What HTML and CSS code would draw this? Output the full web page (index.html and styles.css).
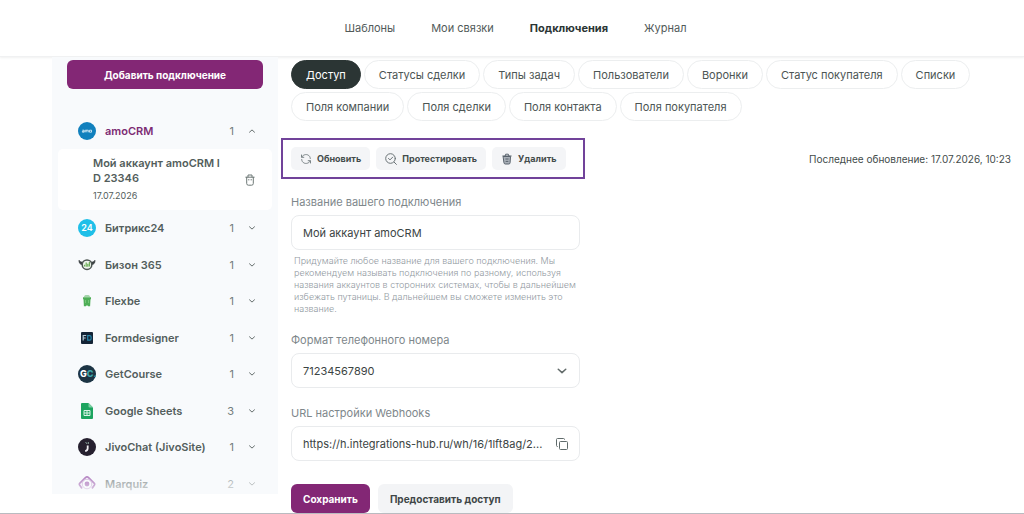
FILE: index.html
```html
<!DOCTYPE html>
<html lang="ru">
<head>
<meta charset="utf-8">
<meta name="viewport" content="width=device-width, initial-scale=1">
<title>Подключения</title>
<link rel="stylesheet" href="styles.css">
</head>
<body>
<svg class="sprite" aria-hidden="true">
  <symbol id="chevron" viewBox="0 0 8 8"><path d="M1.500 2.800 4 5.100 6.500 2.800" fill="none" stroke="currentColor" stroke-width="1" stroke-linecap="round" stroke-linejoin="round"/></symbol>
</svg>
<header class="header">
  <nav class="nav">
    <a href="#">Шаблоны</a>
    <a href="#">Мои связки</a>
    <a href="#" class="active" aria-current="page">Подключения</a>
    <a href="#">Журнал</a>
  </nav>
</header>
<div class="page">
  <aside class="sidebar">
    <button class="btn btn-primary btn-add">Добавить подключение</button>
    <button class="service service-open">
      <svg class="logo" viewBox="0 0 18 18"><circle cx="9" cy="9" r="9" fill="#1180bd"/><path d="M4.400 8.200h1.800v2H4.400v-1h1.800M7.300 10.300V8.200h3v2.100M8.800 8.200v2.100M11.500 8.200h2v2h-2z" fill="none" stroke="#e6f4fb" stroke-width=".8"/></svg>
      <span class="service-name">amoCRM</span><span class="count">1</span>
      <svg class="chevron up"><use href="#chevron"/></svg>
    </button>
    <div class="account">
      <div class="account-info">
        <div class="account-name">Мой аккаунт amoCRM ID 23346</div>
        <div class="account-date">17.07.2026</div>
      </div>
      <button class="icon-btn" aria-label="Удалить аккаунт">
        <svg width="10" height="12" viewBox="0 0 10 12" fill="none" stroke="#6d7876" stroke-width="1" stroke-linecap="round" stroke-linejoin="round"><path d="M.8 3.200h8.400M3 3V1h4v2M1.700 3.300v6.200q0 1.700 1.700 1.700h3.200q1.700 0 1.700-1.700V3.300M3.800 5.500v.5M6.200 5.500v.5"/></svg>
      </button>
    </div>
    <div class="services">
      <button class="service">
        <svg class="logo" viewBox="0 0 18 18"><circle cx="9" cy="9" r="9" fill="#1fbfe8"/><text x="9" y="12" text-anchor="middle" class="mark mark-24">24</text></svg>
        <span class="service-name">Битрикс24</span><span class="count">1</span><svg class="chevron"><use href="#chevron"/></svg>
      </button>
      <button class="service">
        <svg class="logo" viewBox="0 0 18 18" fill="none"><path d="M4.600 8.600C1.800 8.500.8 6.600 1.100 4.300 2 6 3.200 6.200 4.900 6.200M13.400 8.600c2.800-.1 3.800-2 3.500-4.300-.9 1.700-2.100 1.900-3.800 1.900" fill="#3b4042" stroke="#3b4042" stroke-width=".8"/><circle cx="9" cy="8.700" r="4.800" fill="#eef4ec" stroke="#4c5552" stroke-width="1.500"/><path d="M6.500 10.600V8.800M8.200 10.800V6.500M9.800 10.800V7.700M11.400 10.600V6" stroke="#6cae58" stroke-width="1.200"/></svg>
        <span class="service-name">Бизон 365</span><span class="count">1</span><svg class="chevron"><use href="#chevron"/></svg>
      </button>
      <button class="service">
        <svg class="logo" viewBox="0 0 18 18" fill="#4fae57"><path d="M5.800 4.800Q6.300 3.300 7.500 3.300h3q1.200 0 1.700 1.500z" opacity=".65"/><path d="M5 5.300h8v2H5zM5.500 7h7l-.4 7.300h-2.100l-.3-.8H8.300l-.3.800H5.900z"/><path d="M7.500 8v3M10.500 8v3" stroke="#75c477"/></svg>
        <span class="service-name">Flexbe</span><span class="count">1</span><svg class="chevron"><use href="#chevron"/></svg>
      </button>
      <button class="service">
        <svg class="logo" viewBox="0 0 18 18" fill="none"><rect x="3" y="3" width="12" height="12" rx="1" fill="#142436"/><path d="M5.200 11.500v-5h3M5.200 9h2.500" stroke="#b3c8d3" stroke-width="1.200"/><path d="M9.700 6.700h2.100q1.300 0 1.300 1.400v1.700q0 1.400-1.300 1.400H9.700z" stroke="#2787ab" stroke-width="1.200"/></svg>
        <span class="service-name">Formdesigner</span><span class="count">1</span><svg class="chevron"><use href="#chevron"/></svg>
      </button>
      <button class="service">
        <svg class="logo" viewBox="0 0 18 18"><circle cx="9" cy="9" r="9" fill="#1c3444"/><text x="2" y="12" class="mark">G<tspan class="mark-teal">C.</tspan></text></svg>
        <span class="service-name">GetCourse</span><span class="count">1</span><svg class="chevron"><use href="#chevron"/></svg>
      </button>
      <button class="service">
        <svg class="logo" viewBox="0 0 18 18"><path d="M4 1h6.500L15 5.500V16q0 1-1 1H4q-1 0-1-1V2q0-1 1-1z" fill="#1da45f"/><path d="M10.500 1 15 5.500h-3.500q-1 0-1-1z" fill="#7bd0a3"/><path d="M6 8.500h6v5H6zM6 11h6M9 8.500v5" fill="none" stroke="#d8f2e4"/></svg>
        <span class="service-name">Google Sheets</span><span class="count">3</span><svg class="chevron"><use href="#chevron"/></svg>
      </button>
      <button class="service">
        <svg class="logo" viewBox="0 0 18 18"><circle cx="9" cy="9" r="9" fill="#26202f"/><path d="M9.700 7.500v2.800q0 2.300-2.500 2.800" fill="none" stroke="#f1eff4" stroke-width="1.800"/><path d="M7.500 4.500q1.200 0 1.300 1.300M10.300 4v2" stroke="#8ba79e" fill="none"/></svg>
        <span class="service-name">JivoChat (JivoSite)</span><span class="count">1</span><svg class="chevron"><use href="#chevron"/></svg>
      </button>
      <button class="service">
        <svg class="logo" viewBox="0 0 18 18" fill="none"><path d="M4 13.500 1.600 10q-.6-1 .3-1.900L7.700 2.300q1.300-1 2.600 0l5.800 5.800q.9.900.3 1.900L14 13.500" stroke="#86329a" stroke-width="1.700"/><circle cx="9" cy="9" r="4.800" stroke="#b98ac6" stroke-width="1"/><circle cx="9" cy="9" r="2.400" fill="#86329a"/></svg>
        <span class="service-name">Marquiz</span><span class="count">2</span><svg class="chevron"><use href="#chevron"/></svg>
      </button>
    </div>
  </aside>
  <main class="content">
    <div class="tabs">
      <button class="tab tab-active">Доступ</button>
      <button class="tab">Статусы сделки</button>
      <button class="tab">Типы задач</button>
      <button class="tab">Пользователи</button>
      <button class="tab">Воронки</button>
      <button class="tab">Статус покупателя</button>
      <button class="tab">Списки</button>
      <button class="tab">Поля компании</button>
      <button class="tab">Поля сделки</button>
      <button class="tab">Поля контакта</button>
      <button class="tab">Поля покупателя</button>
    </div>
    <div class="toolbar">
      <div class="actions">
        <button class="action">
          <svg width="12" height="12" viewBox="0 0 12 12" fill="none" stroke="#7b8487" stroke-linecap="round" stroke-linejoin="round"><path d="M1.500 2v2.300h2.300M1.800 4C3.200 1.200 7.600.5 9.600 3.400q.6 1 .7 2.100M10.500 10V7.700H8.200M10.200 8C8.800 10.800 4.400 11.500 2.400 8.600q-.6-1-.7-2.100"/></svg>
          Обновить
        </button>
        <button class="action">
          <svg width="12" height="12" viewBox="0 0 12 12" fill="none" stroke="#6a7376" stroke-linecap="round" stroke-linejoin="round"><circle cx="5.500" cy="5.500" r="4.800"/><path d="m9.200 9.200 2.200 2.200M3.500 5.400 5 6.900l2.700-2.800"/></svg>
          Протестировать
        </button>
        <button class="action">
          <svg width="12" height="12" viewBox="0 0 12 12" fill="none" stroke="#59636d" stroke-linecap="round" stroke-linejoin="round"><path d="M2.500 3.500h7l-.4 6.200q-.1 1.300-1.300 1.300H4.200q-1.200 0-1.300-1.300z" fill="#a9b0b8"/><path d="M1.800 3h8.400M4.200 2.700 4.700 1.200h2.600l.5 1.500M4.800 6h2.400M5 8.400h2"/></svg>
          Удалить
        </button>
      </div>
      <div class="updated">Последнее обновление: 17.07.2026, 10:23</div>
    </div>
    <form class="form">
      <div class="field">
        <label for="name">Название вашего подключения</label>
        <input id="name" class="control" type="text" value="Мой аккаунт amoCRM">
        <p class="hint">Придумайте любое название для вашего подключения. Мы рекомендуем называть подключения по разному, используя названия аккаунтов в сторонних системах, чтобы в дальнейшем избежать путаницы. В дальнейшем вы сможете изменить это название.</p>
      </div>
      <div class="field">
        <label for="phone">Формат телефонного номера</label>
        <div class="control control-box">
          <select id="phone"><option>71234567890</option></select>
          <svg class="select-arrow"><use href="#chevron"/></svg>
        </div>
      </div>
      <div class="field">
        <label for="url">URL настройки Webhooks</label>
        <div class="control control-box">
          <input id="url" type="text" readonly value="https://h.integrations-hub.ru/wh/16/1lft8ag/2...">
          <button type="button" class="icon-btn" aria-label="Копировать">
            <svg width="12" height="12" viewBox="0 0 12 12" fill="none" stroke="#606b6b" stroke-linejoin="round"><rect x="3.500" y="3.500" width="8" height="8" rx="1"/><path d="M1.800 8.500H1.500q-1 0-1-1v-6q0-1 1-1h6q1 0 1 1v.3"/></svg>
          </button>
        </div>
      </div>
      <div class="form-buttons">
        <button type="button" class="btn btn-primary">Сохранить</button>
        <button type="button" class="btn btn-light">Предоставить доступ</button>
      </div>
    </form>
  </main>
</div>
</body>
</html>
```
FILE: styles.css
```css
* { box-sizing: border-box; }
body {
  margin: 0;
  height: 100vh;
  overflow: hidden;
  display: flex;
  flex-direction: column;
  border-bottom: 1px solid #b9bbc0;
  background: #fff;
  color: #434c4b;
  font: 11px/16px Inter, "Liberation Sans", sans-serif;
}
button, input, select { font: inherit; color: inherit; border: 0; background: none; padding: 0; margin: 0; outline: 0; }
button { cursor: pointer; }
svg { display: block; flex: none; }
.sprite { position: absolute; width: 0; height: 0; }

.header {
  flex: none;
  display: flex;
  justify-content: center;
  padding: 20px 0 20px 7px;
  border-bottom: 1px solid #f0f1f2;
  box-shadow: 0 1px 2px #f0f1f1;
}
.nav { display: flex; gap: 36px; }
.nav a { color: #515a59; text-decoration: none; }
.nav .active { color: #2b3534; font-weight: 700; }

.page { flex: 1; min-height: 0; display: flex; padding: 0 13px 0 52px; }
.sidebar {
  position: relative;
  flex: none;
  width: 226px;
  margin-bottom: 19px;
  overflow: hidden;
  display: flex;
  flex-direction: column;
  background: #f8fafc;
}
.sidebar::after {
  content: "";
  position: absolute;
  inset: auto 0 0;
  height: 36px;
  background: linear-gradient(#f8fafc00, #f8fafccc);
  pointer-events: none;
}
.btn { height: 29px; padding: 0 12px; border-radius: 6px; font-size: 10px; font-weight: 700; white-space: nowrap; }
.btn-primary { background: #832775; color: #fff; }
.btn-light { background: #f3f4f6; color: #3f4647; }
.btn-add { flex: none; margin: 3px 15px 24px; }
.service {
  flex: none;
  display: flex;
  align-items: center;
  width: 100%;
  padding: 0 22px 0 26px;
  text-align: left;
  color: #535e5c;
}
.service-open { height: 36px; }
.service-open .service-name { color: #7c2b73; }
.service-name { flex: 1; margin-left: 9px; font-weight: 600; }
.count { color: #747d7d; }
.logo { width: 18px; height: 18px; }
.mark { font: 800 9px Inter, sans-serif; fill: #fff; }
.mark-24 { font-weight: 600; }
.mark-teal { fill: #3fa7ad; }
.chevron { width: 8px; height: 8px; margin-left: 14px; color: #656e6d; }
.up { transform: rotate(180deg); }
.account {
  flex: none;
  display: flex;
  align-items: center;
  justify-content: space-between;
  margin: 0 6px;
  padding: 7px 17px 6px 35px;
  background: #fff;
  border-radius: 5px;
}
.account-info { width: 128px; }
.account-name { font-weight: 600; line-height: 15px; color: #535e5c; word-break: break-all; }
.account-date { margin-top: 2px; font-size: 9px; color: #535e5c; }
.services { flex: 1; display: grid; grid-auto-rows: 1fr; margin-bottom: -8px; }

.content { flex: 1; min-width: 0; padding: 3px 0 0 13px; }
.tabs { display: flex; flex-wrap: wrap; gap: 3px; }
.tab { height: 29px; padding: 0 14px; border: 1px solid #eceeef; border-radius: 15px; color: #4c5554; }
.tab-active { background: #2b3534; border-color: #2b3534; color: #fff; }
.toolbar { display: flex; align-items: center; justify-content: space-between; margin: 17px 0 15px -10px; }
.actions { display: flex; gap: 6px; padding: 7px 17px 7px 8px; border: 2px solid #71439a; }
.action {
  display: flex;
  align-items: center;
  gap: 5px;
  height: 23px;
  padding: 0 9px;
  border-radius: 5px;
  background: #f4f5f7;
  font-size: 9px;
  font-weight: 700;
}
.updated { font-size: 10px; }
.form { width: 289px; }
.field { display: flex; flex-direction: column; gap: 5px; margin-bottom: 17px; }
.field label { color: #7e878b; }
.control { width: 100%; height: 35px; padding: 0 11px; border: 1px solid #e9ebed; border-radius: 8px; color: #3b4443; }
.control-box { display: flex; align-items: center; }
.control-box select, .control-box input { flex: 1; min-width: 0; appearance: none; }
.select-arrow { width: 12px; height: 12px; color: #626b6a; }
.hint { margin: 0 0 0 3px; font-size: 9px; font-weight: 300; line-height: 12px; color: #929a9f; }
.form-buttons { display: flex; gap: 8px; padding-top: 6px; }
```
